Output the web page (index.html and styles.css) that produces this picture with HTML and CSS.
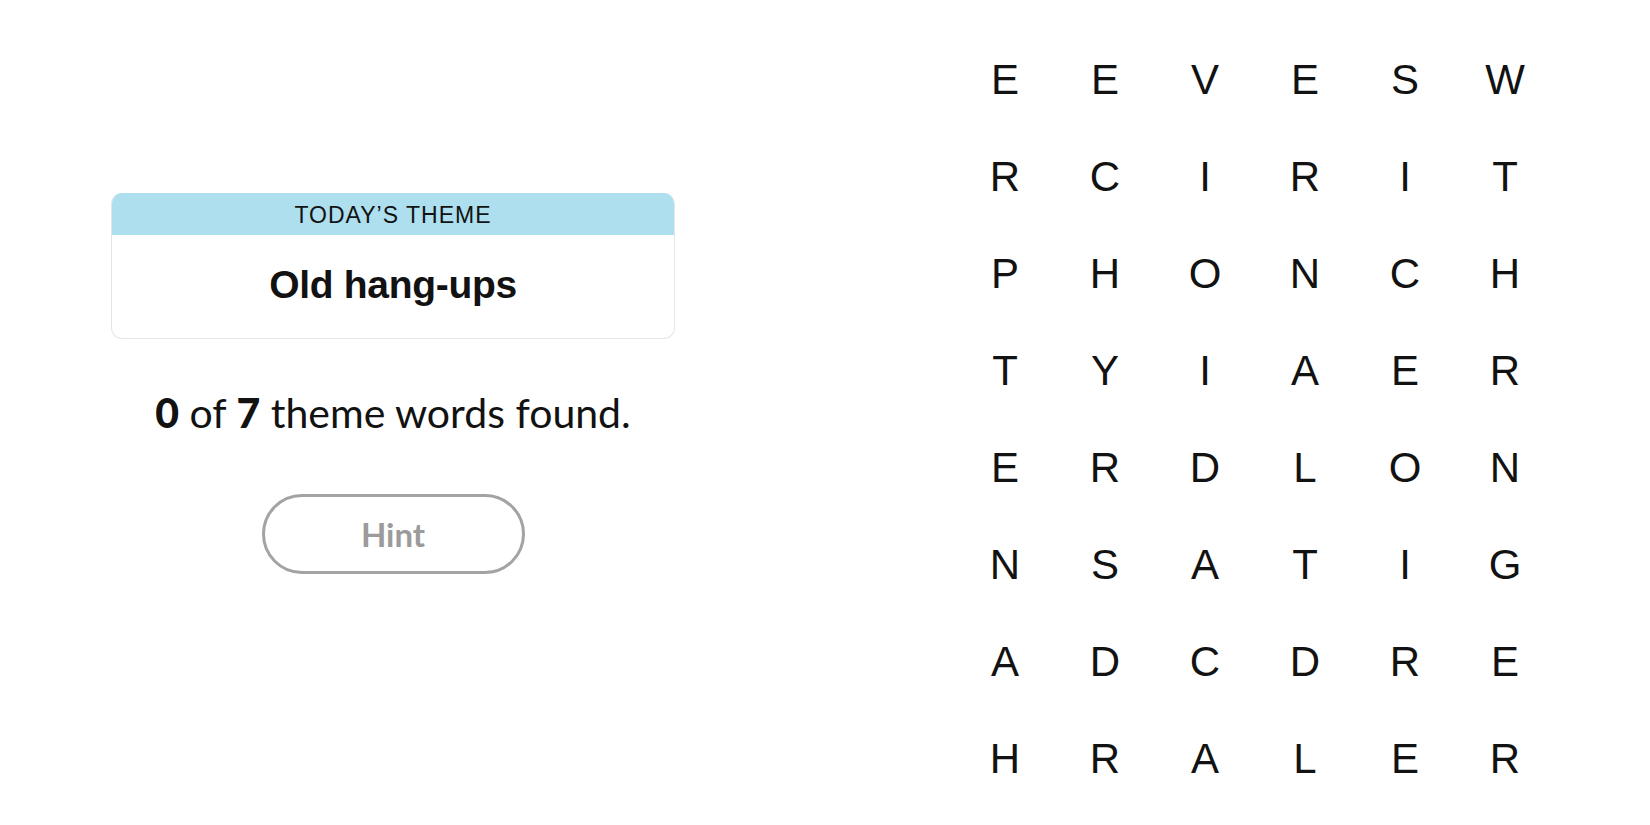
FILE: index.html
```html
<!DOCTYPE html>
<html>
<head>
<meta charset="utf-8">
<link rel="stylesheet" href="styles.css">
</head>
<body>
<div class="page">
  <div class="left">
    <div class="theme-card">
      <div class="theme-head">TODAY’S THEME</div>
      <div class="theme-body">Old hang-ups</div>
    </div>
    <p class="found"><b>0</b> of <b>7</b> theme words found.</p>
    <button class="hint">Hint</button>
  </div>
  <div class="board">
    <span>E</span><span>E</span><span>V</span><span>E</span><span>S</span><span>W</span>
    <span>R</span><span>C</span><span>I</span><span>R</span><span>I</span><span>T</span>
    <span>P</span><span>H</span><span>O</span><span>N</span><span>C</span><span>H</span>
    <span>T</span><span>Y</span><span>I</span><span>A</span><span>E</span><span>R</span>
    <span>E</span><span>R</span><span>D</span><span>L</span><span>O</span><span>N</span>
    <span>N</span><span>S</span><span>A</span><span>T</span><span>I</span><span>G</span>
    <span>A</span><span>D</span><span>C</span><span>D</span><span>R</span><span>E</span>
    <span>H</span><span>R</span><span>A</span><span>L</span><span>E</span><span>R</span>
  </div>
</div>
</body>
</html>
```
FILE: styles.css
```css
html, body {
  margin: 0;
  padding: 0;
  background: #fff;
  color: #121212;
}
.page {
  display: flex;
  align-items: flex-start;
  padding-left: 111px;
}
.left {
  width: 564px;
  padding-top: 193px;
  display: flex;
  flex-direction: column;
  align-items: center;
}
.theme-card {
  width: 564px;
  box-sizing: border-box;
  border: 1px solid #e6e6e6;
  border-top: none;
  border-radius: 11px;
  overflow: hidden;
}
.theme-head {
  background: #aedfee;
  height: 42px;
  line-height: 44px;
  text-align: center;
  font-family: "Liberation Sans", Arial, sans-serif;
  font-size: 23px;
  letter-spacing: 1px;
  color: #121212;
}
.theme-body {
  height: 103px;
  line-height: 100px;
  text-align: center;
  font-family: "Liberation Sans", Arial, sans-serif;
  font-weight: bold;
  font-size: 39px;
  letter-spacing: -0.3px;
}
.found {
  margin: 50px 0 0;
  font-family: Lato, sans-serif;
  font-size: 41px;
  line-height: 48px;
  color: #121212;
}
.found b {
  font-weight: 900;
}
.hint {
  margin-top: 57px;
  width: 263px;
  height: 80px;
  border: 3px solid #a3a3a3;
  border-radius: 42px;
  background: #fff;
  font-family: Lato, sans-serif;
  font-weight: bold;
  font-size: 33px;
  color: #9b9b9b;
  padding: 0;
}
.board {
  margin-left: 280px;
  margin-top: 31px;
  display: grid;
  grid-template-columns: repeat(6, 100px);
  grid-auto-rows: 97px;
  font-family: "Liberation Sans", Arial, sans-serif;
  font-size: 42px;
  color: #121212;
}
.board span {
  display: flex;
  align-items: center;
  justify-content: center;
}
```
